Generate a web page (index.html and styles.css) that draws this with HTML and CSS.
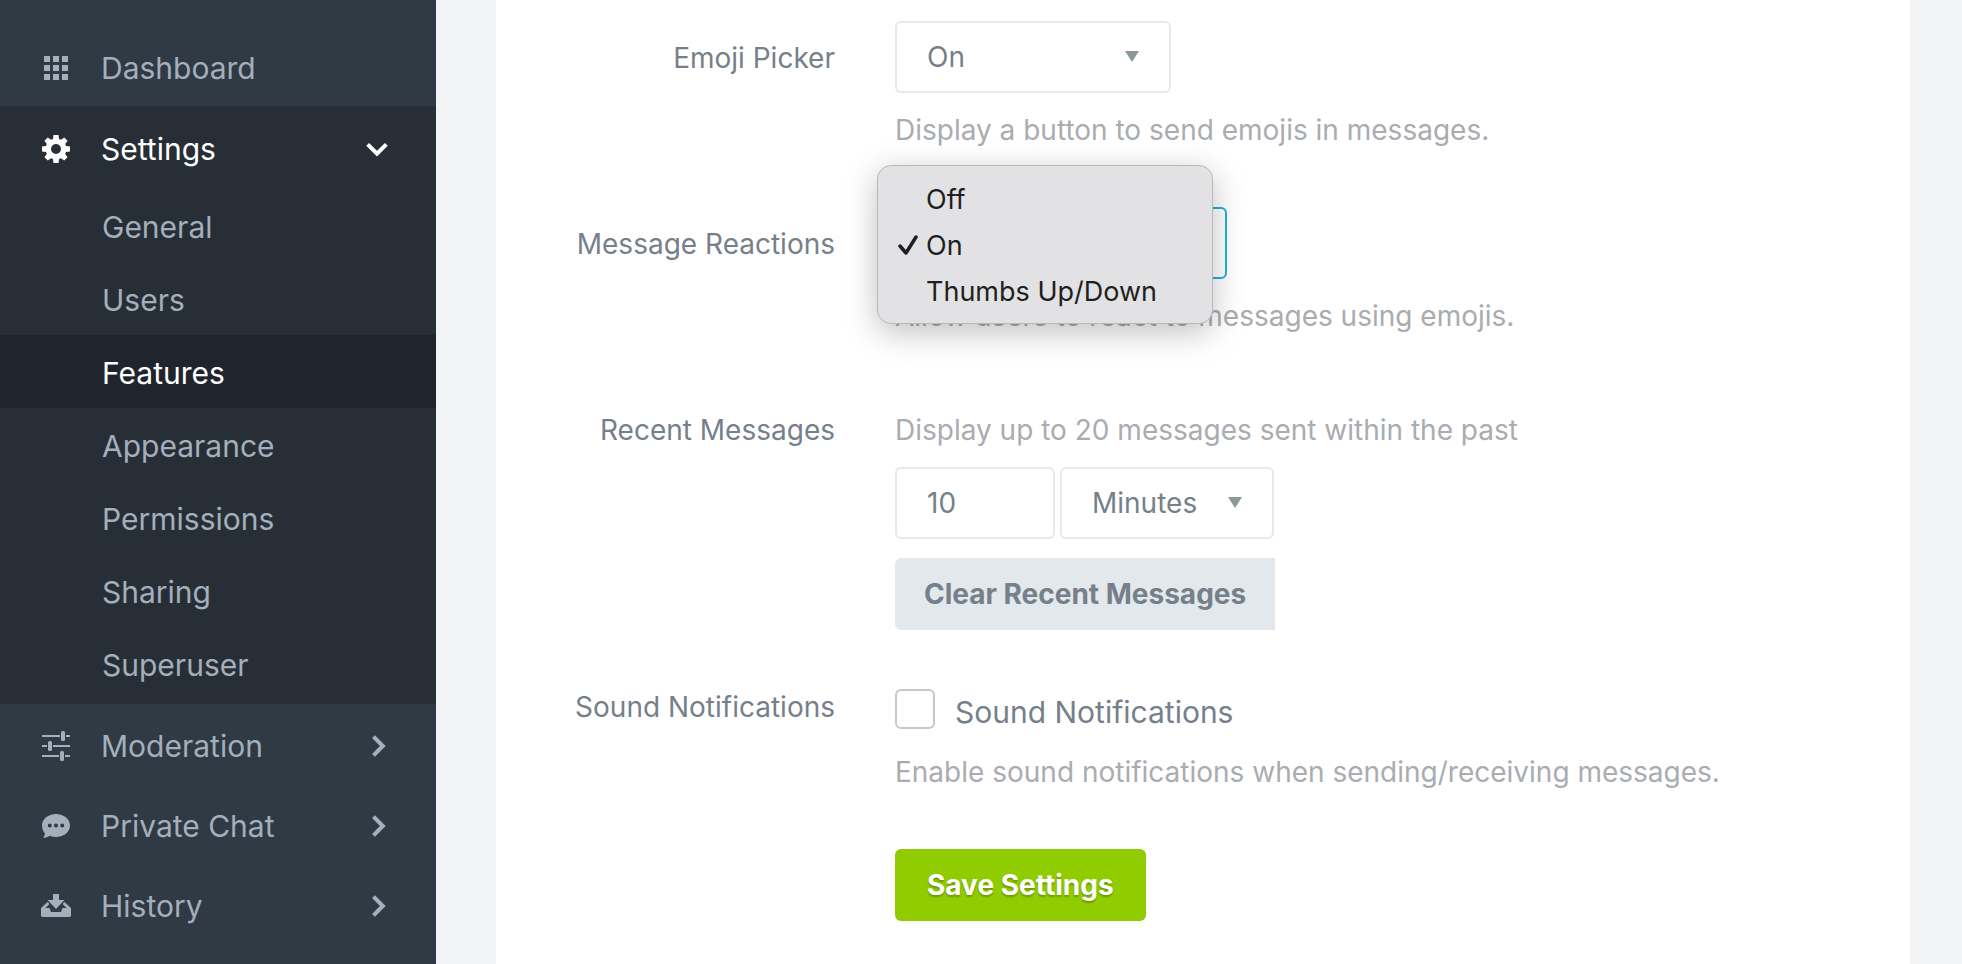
FILE: index.html
```html
<!DOCTYPE html>
<html lang="en">
<head>
<meta charset="utf-8">
<title>Features - Settings</title>
<meta name="viewport" content="width=device-width, initial-scale=1">
<link rel="stylesheet" href="styles.css">
</head>
<body>
<div class="app">
  <nav class="sidebar" aria-label="Main">
    <a class="nav-item" href="#">
      <svg class="nav-icon" viewBox="0 0 30 30"><path d="M3 3h6v6H3zM12 3h6v6h-6zM21 3h6v6h-6zM3 12h6v6H3zM12 12h6v6h-6zM21 12h6v6h-6zM3 21h6v6H3zM12 21h6v6h-6zM21 21h6v6h-6z"/></svg>
      <span class="nav-text">Dashboard</span>
    </a>
    <div class="nav-group">
      <a class="nav-item nav-item-open" href="#">
        <svg class="nav-icon" viewBox="0 0 30 30"><path fill-rule="evenodd" d="M12.500 1h5l.5 4 2 .8 3.200-2.400 3.400 3.400L24.200 10l.8 2 4 .5v5l-4 .5-.8 2 2.400 3.200-3.400 3.400-3.200-2.400-2 .8-.5 4h-5l-.5-4-2-.8-3.200 2.400-3.400-3.400L5.800 20 5 18l-4-.5v-5L5 12l.8-2-2.400-3.200 3.400-3.400L10 5.800l2-.8zM15 10a5 5 0 1 0 0 10 5 5 0 0 0 0-10z"/></svg>
        <span class="nav-text">Settings</span>
        <svg class="chevron" viewBox="0 0 24 24"><path d="M4 8l8 8 8-8"/></svg>
      </a>
      <div class="sub-list">
        <a class="sub-item" href="#">General</a>
        <a class="sub-item" href="#">Users</a>
        <a class="sub-item sub-item-active" href="#" aria-current="page">Features</a>
        <a class="sub-item" href="#">Appearance</a>
        <a class="sub-item" href="#">Permissions</a>
        <a class="sub-item" href="#">Sharing</a>
        <a class="sub-item" href="#">Superuser</a>
      </div>
    </div>
    <a class="nav-item" href="#">
      <svg class="nav-icon" viewBox="0 0 30 30"><path d="M1 4h18v2H1zM25 4h4v2h-4zM1 14h5v2H1zM12 14h17v2H12zM1 24h17v2H1zM24 24h5v2h-5z"/><rect x="20" y="0" width="4" height="10" rx="1.500"/><rect x="7" y="10" width="4" height="10" rx="1.500"/><rect x="19" y="20" width="4" height="10" rx="1.500"/></svg>
      <span class="nav-text">Moderation</span>
      <svg class="chevron" viewBox="0 0 24 24"><path d="M9 4l8 8-8 8"/></svg>
    </a>
    <a class="nav-item" href="#">
      <svg class="nav-icon" viewBox="0 0 30 30"><path fill-rule="evenodd" d="M15 3c7.800 0 14 5 14 11.500S22.800 26 15 26c-2.300 0-4.500-.4-6.400-1.200C6.800 26.200 4.600 26.800 2 26.600c1.200-1.200 1.800-2.600 1.900-4.200C2 20.300 1 17.500 1 14.500 1 8 7.200 3 15 3zM8.800 12.500a2 2 0 1 0 0 4 2 2 0 0 0 0-4zm6.200 0a2 2 0 1 0 0 4 2 2 0 0 0 0-4zm6.200 0a2 2 0 1 0 0 4 2 2 0 0 0 0-4z"/></svg>
      <span class="nav-text">Private Chat</span>
      <svg class="chevron" viewBox="0 0 24 24"><path d="M9 4l8 8-8 8"/></svg>
    </a>
    <a class="nav-item" href="#">
      <svg class="nav-icon" viewBox="0 0 30 30"><path d="M12 3h6v6h5.500L15 18 6.500 9H12z"/><path d="M6.500 11L0 17v7.500Q0 26 1.500 26h27q1.500 0 1.500-1.500V17l-6.500-6-2 2 4 4h-4L20 21H10l-1.500-4h-4l4-4z"/></svg>
      <span class="nav-text">History</span>
      <svg class="chevron" viewBox="0 0 24 24"><path d="M9 4l8 8-8 8"/></svg>
    </a>
  </nav>

  <main class="content">
    <form class="card">
      <div class="row">
        <label class="row-label" for="emoji">Emoji Picker</label>
        <div class="field">
          <div class="select-box select-emoji">
            <select class="control" id="emoji"><option>On</option><option>Off</option></select>
            <svg class="arrow" viewBox="0 0 14 11"><path d="M0 0h14L7 11z"/></svg>
          </div>
          <p class="hint">Display a button to send emojis in messages.</p>
        </div>
      </div>

      <div class="row">
        <label class="row-label" for="reactions">Message Reactions</label>
        <div class="field">
          <div class="select-box select-reactions">
            <select class="control control-focus" id="reactions"><option>Off</option><option selected>On</option><option>Thumbs Up/Down</option></select>
            <ul class="menu" role="listbox" aria-label="Message Reactions">
              <li class="menu-item" role="option">Off</li>
              <li class="menu-item" role="option" aria-selected="true"><svg class="check" viewBox="0 0 20 20"><path d="M2 11l6 7L18 2"/></svg>On</li>
              <li class="menu-item" role="option">Thumbs Up/Down</li>
            </ul>
          </div>
          <p class="hint">Allow users to react to messages using emojis.</p>
        </div>
      </div>

      <div class="row">
        <label class="row-label" for="amount">Recent Messages</label>
        <div class="field field-text">
          <p class="hint">Display up to 20 messages sent within the past</p>
          <div class="inline">
            <input class="control control-amount" id="amount" type="text" value="10">
            <div class="select-box select-unit">
              <select class="control" aria-label="Time unit"><option>Minutes</option><option>Hours</option></select>
              <svg class="arrow" viewBox="0 0 14 11"><path d="M0 0h14L7 11z"/></svg>
            </div>
          </div>
          <button class="button button-clear" type="button">Clear Recent Messages</button>
        </div>
      </div>

      <div class="row">
        <span class="row-label row-label-top">Sound Notifications</span>
        <div class="field">
          <label class="check-row"><input class="checkbox" type="checkbox"><span class="check-text">Sound Notifications</span></label>
          <p class="hint">Enable sound notifications when sending/receiving messages.</p>
        </div>
      </div>

      <div class="row">
        <div class="field field-actions"><button class="button button-save" type="submit">Save Settings</button></div>
      </div>
    </form>
  </main>
</div>
</body>
</html>
```
FILE: styles.css
```css
* { box-sizing: border-box; }

body {
  margin: 0;
  background: #f2f3f5;
  color: #76808b;
  font-family: Inter, "Open Sans", sans-serif;
  font-size: 28px;
  line-height: 36px;
}

.app { display: flex; min-height: 100vh; }

.sidebar {
  flex: 0 0 436px;
  padding-top: 26px;
  background: #2f3a44;
}

.nav-item {
  display: flex;
  align-items: center;
  height: 80px;
  padding: 4px 45px 0 41px;
  color: #a3afbb;
  font-size: 30px;
  text-decoration: none;
}
.nav-item-open { padding-top: 6px; color: #fff; }
.nav-icon { width: 30px; height: 30px; margin-right: 30px; fill: currentColor; }
.nav-text { flex: 1; }
.chevron {
  width: 28px;
  height: 28px;
  fill: none;
  stroke: currentColor;
  stroke-width: 3.500;
}
.nav-group { background: #282e36; }
.sub-list { padding: 3px 0 4px; }
.sub-item {
  display: flex;
  align-items: center;
  height: 73px;
  padding: 2px 24px 0 102px;
  color: #a3afbb;
  font-size: 30px;
  text-decoration: none;
}
.sub-item-active { background: #20252d; color: #fff; }

.content { flex: 1; padding: 0 52px 0 60px; }
.card {
  display: flex;
  flex-direction: column;
  gap: 59px;
  min-height: 100%;
  padding: 21px 60px 42px 0;
  background: #fff;
}
.row { display: grid; grid-template-columns: 339px 1fr; column-gap: 60px; }
.row-label { padding-top: 19px; text-align: right; }
.row-label-top { padding-top: 0; }
.field { display: flex; flex-direction: column; align-items: flex-start; gap: 19px; }
.field-text { padding-top: 19px; }
.field-actions { grid-column: 2; }
.hint { margin: 0; color: #a9acb0; }
.inline { display: flex; gap: 5px; }

.control {
  width: 100%;
  height: 72px;
  padding: 0 30px;
  border: 2px solid #e6e8ea;
  border-radius: 6px;
  outline: 0;
  background: #fff;
  color: #76808b;
  font: inherit;
  appearance: none;
}
.control-focus { border-color: #1fb0da; }
.control-amount { width: 160px; }
.select-box { position: relative; }
.select-emoji { width: 276px; }
.select-reactions { width: 332px; }
.select-unit { width: 214px; }
.arrow {
  position: absolute;
  top: 30px;
  right: 32px;
  width: 14px;
  height: 11px;
  fill: #8a9899;
  pointer-events: none;
}

.menu {
  position: absolute;
  top: -42px;
  left: -18px;
  width: 336px;
  margin: 0;
  padding: 11px 0 8px;
  border: 1px solid #b9b9bb;
  border-radius: 14px;
  background: #e2e2e4;
  box-shadow: 0 8px 32px rgba(0, 0, 0, 0.25);
  color: #1f1f21;
  font-size: 27px;
  list-style: none;
}
.menu-item { position: relative; padding: 5px 0 5px 48px; }
.check {
  position: absolute;
  top: 12px;
  left: 20px;
  width: 20px;
  height: 20px;
  fill: none;
  stroke: currentColor;
  stroke-width: 3.500;
  stroke-linecap: round;
  stroke-linejoin: round;
}

.button {
  height: 72px;
  padding: 0 32px;
  border: 0;
  border-radius: 6px;
  font: inherit;
  font-weight: 700;
}
.button-clear { padding: 0 29px; border-radius: 6px 0 0 6px; background: #e2e8eb; color: #76808b; }
.button-save { background: #90cc00; color: #fff; text-shadow: 0 2px 2px rgba(0, 0, 0, 0.25); }

.check-row { display: flex; align-items: flex-start; gap: 20px; min-height: 46px; font-size: 30px; }
.checkbox {
  width: 40px;
  height: 40px;
  margin: 0;
  border: 2px solid #c6c8ca;
  border-radius: 6px;
  background: #fff;
  appearance: none;
}
.check-text { padding-top: 5px; }
```
